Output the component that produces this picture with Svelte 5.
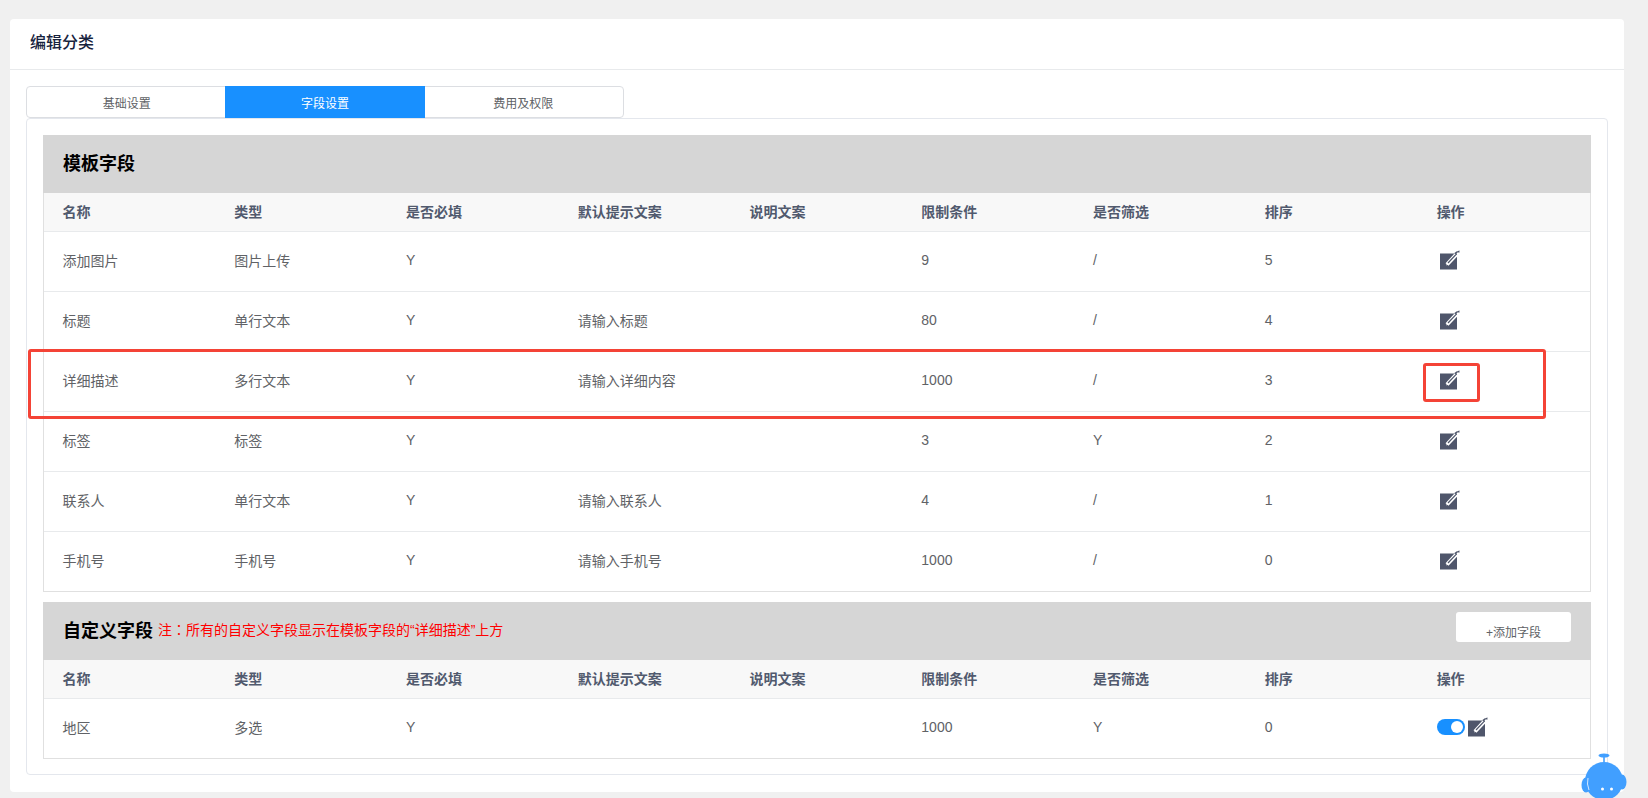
<script lang="ts">
  const columns = ["名称", "类型", "是否必填", "默认提示文案", "说明文案", "限制条件", "是否筛选", "排序", "操作"];

  const templateRows = [
    ["添加图片", "图片上传", "Y", "", "", "9", "/", "5"],
    ["标题", "单行文本", "Y", "请输入标题", "", "80", "/", "4"],
    ["详细描述", "多行文本", "Y", "请输入详细内容", "", "1000", "/", "3"],
    ["标签", "标签", "Y", "", "", "3", "Y", "2"],
    ["联系人", "单行文本", "Y", "请输入联系人", "", "4", "/", "1"],
    ["手机号", "手机号", "Y", "请输入手机号", "", "1000", "/", "0"],
  ];

  const customRows = [["地区", "多选", "Y", "", "", "1000", "Y", "0"]];

  const tabs = ["基础设置", "字段设置", "费用及权限"];
  let activeTab = $state(1);
  let regionOn = $state(true);
</script>

{#snippet editIcon()}
  <svg class="edit-icon" viewBox="0 0 20 20" width="20" height="20" aria-hidden="true">
    <rect x="0" y="3.5" width="17" height="16" fill="#4f566b" />
    <path d="M7 14.5 L16.4 4.4" fill="none" stroke="#fff" stroke-width="4" />
    <path d="M6 15.5 L8 11.8 L10 13.6 Z" fill="#fff" />
    <path d="M8 13 L16.6 3.8" fill="none" stroke="#4f566b" stroke-width="1.2" />
    <path d="M14.8 3.6 L17.6 1.6" fill="none" stroke="#4f566b" stroke-width="1.4" />
    <path d="M17 1.2 L19.6 0.4 L19.2 3 Z" fill="#4f566b" />
  </svg>
{/snippet}

{#snippet fieldTable(rows: string[][], withSwitch: boolean)}
  <table>
    <thead>
      <tr>
        {#each columns as col}
          <th>{col}</th>
        {/each}
      </tr>
    </thead>
    <tbody>
      {#each rows as row}
        <tr>
          {#each row as cell}
            <td>{cell}</td>
          {/each}
          <td>
            <div class="actions">
              {#if withSwitch}
                <button
                  class="switch"
                  class:on={regionOn}
                  aria-label="启用"
                  onclick={() => (regionOn = !regionOn)}
                ></button>
              {/if}
              {@render editIcon()}
            </div>
          </td>
        </tr>
      {/each}
    </tbody>
  </table>
{/snippet}

<div class="page">
  <div class="card">
    <div class="card-title">编辑分类</div>
    <div class="card-body">
      <div class="tabs">
        {#each tabs as tab, i}
          <button class="tab" class:active={activeTab === i} onclick={() => (activeTab = i)}>{tab}</button>
        {/each}
      </div>
      <div class="panel">
        <section>
          <div class="section-head">
            <h3>模板字段</h3>
          </div>
          {@render fieldTable(templateRows, false)}
        </section>
        <section class="custom">
          <div class="section-head">
            <h3>自定义字段</h3>
            <span class="note">注<span class="colon">：</span>所有的自定义字段显示在模板字段的“详细描述”上方</span>
            <button class="add-btn">+添加字段</button>
          </div>
          {@render fieldTable(customRows, true)}
        </section>
      </div>
    </div>
  </div>

  <!-- annotation boxes drawn over the screenshot -->
  <div class="mark mark-row"></div>
  <div class="mark mark-icon"></div>

  <div class="robot" aria-hidden="true">
    <svg viewBox="0 0 46 50" width="46" height="50">
      <ellipse cx="23" cy="2.5" rx="5.5" ry="2" fill="#419fff" />
      <rect x="22.2" y="3" width="1.6" height="6" fill="#419fff" />
      <ellipse cx="5" cy="32" rx="4.5" ry="7.5" fill="#419fff" />
      <ellipse cx="41" cy="29" rx="4.5" ry="7.5" fill="#419fff" />
      <circle cx="23" cy="28" r="19" fill="#419fff" />
      <path d="M7 25 Q5.5 31 8 37" fill="none" stroke="#d5e9ff" stroke-width="1" />
      <circle cx="21.5" cy="36" r="1.5" fill="#fff" />
      <circle cx="30.5" cy="36" r="1.5" fill="#fff" />
    </svg>
  </div>
</div>

<style>
  :global(body) {
    background: #f0f0f0;
    font-family: "Liberation Sans", "Noto Sans CJK SC", sans-serif;
  }

  .page {
    position: relative;
    height: 798px;
    overflow: hidden;
    padding: 19px 24px 6px 10px;
    box-sizing: border-box;
  }

  .card {
    background: #fff;
    border-radius: 4px;
    height: 773px;
    box-sizing: border-box;
  }

  .card-title {
    height: 50px;
    line-height: 48px;
    padding-left: 20px;
    font-size: 16px;
    font-weight: 500;
    color: #17233d;
    border-bottom: 1px solid #e8eaec;
  }

  .card-body {
    padding: 16px 16px 0;
  }

  .tabs {
    display: flex;
    width: 598px;
    height: 32px;
    box-sizing: border-box;
    border: 1px solid #dcdee2;
    border-radius: 4px;
  }

  .tab {
    flex: 1;
    padding: 0;
    border: 0;
    background: none;
    font: inherit;
    font-size: 12px;
    color: #606266;
    cursor: pointer;
  }

  .tab.active {
    margin: -1px;
    background: #1890ff;
    color: #fff;
  }

  .panel {
    height: 657px;
    box-sizing: border-box;
    padding: 16px;
    border: 1px solid #e4e7ed;
    border-radius: 4px;
  }

  .section-head {
    display: flex;
    align-items: center;
    height: 58px;
    padding-left: 20px;
    padding-bottom: 4px;
    background: #d6d6d6;
    box-sizing: border-box;
  }

  .section-head h3 {
    margin: 0;
    font-size: 18px;
    font-weight: 700;
    color: #000;
  }

  .custom {
    margin-top: 10px;
  }

  .note {
    margin-left: 5px;
    font-size: 14px;
    color: #f00;
  }

  .colon {
    font-family: "Noto Sans CJK TC", sans-serif;
  }

  .add-btn {
    width: 115px;
    height: 30px;
    margin-left: auto;
    margin-right: 20px;
    padding: 8px 0 0;
    border: 0;
    border-radius: 3px;
    background: #fff;
    font: inherit;
    font-size: 12px;
    color: #606266;
    cursor: pointer;
    position: relative;
    top: -2px;
  }

  table {
    width: 100%;
    table-layout: fixed;
    border-collapse: separate;
    border-spacing: 0;
    border: 1px solid #e0e0e0;
    border-width: 0 1px;
  }

  th,
  td {
    padding: 0 0 4px 18.5px;
    text-align: left;
    font-size: 14px;
    color: #606266;
    border-bottom: 1px solid #e8eaec;
    box-sizing: border-box;
  }

  th {
    height: 39px;
    padding-bottom: 2px;
    background: #f8f8f8;
    font-weight: 700;
    color: #515a6e;
  }

  td {
    height: 60px;
  }

  tr:last-child td {
    border-bottom-color: #e0e0e0;
  }

  .actions {
    display: flex;
    align-items: center;
    gap: 0;
  }

  .edit-icon {
    display: block;
    margin-left: 3px;
  }

  .switch {
    position: relative;
    width: 28px;
    height: 16px;
    padding: 0;
    border: 0;
    border-radius: 8px;
    background: #bbb;
    cursor: pointer;
  }

  .switch.on {
    background: #1890ff;
  }

  .switch::after {
    content: "";
    position: absolute;
    top: 2px;
    left: 2px;
    width: 12px;
    height: 12px;
    border-radius: 50%;
    background: #fff;
  }

  .switch.on::after {
    left: 14px;
  }

  .mark {
    position: absolute;
    border: 3px solid #f44336;
    border-radius: 3px;
    box-sizing: border-box;
    pointer-events: none;
  }

  .mark-row {
    left: 28px;
    top: 349px;
    width: 1518px;
    height: 70px;
  }

  .mark-icon {
    left: 1423px;
    top: 363px;
    width: 57px;
    height: 39px;
  }

  .robot {
    position: absolute;
    left: 1581px;
    top: 753px;
  }
</style>
